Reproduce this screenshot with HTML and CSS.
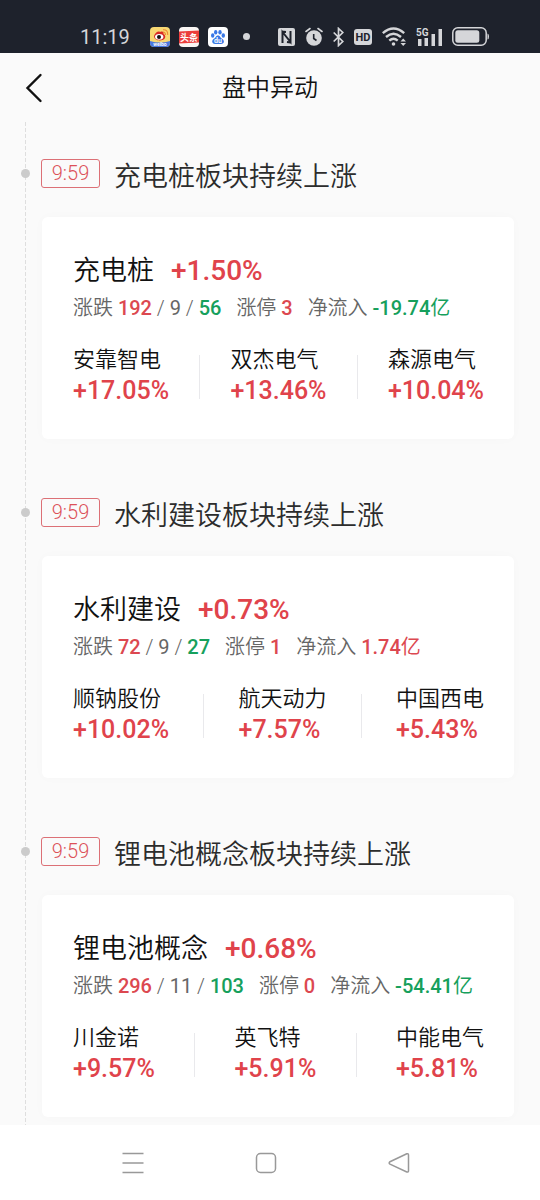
FILE: index.html
```html
<!DOCTYPE html>
<html lang="zh-CN">
<head>
<meta charset="utf-8">
<meta name="viewport" content="width=device-width, initial-scale=1">
<title>盘中异动</title>
<link rel="stylesheet" href="styles.css">
</head>
<body>
<div class="app">
  <div class="status">
    <div class="status-left">
      <span class="clock">11:19</span>
      <svg width="20" height="20" viewBox="0 0 20 20"><defs><clipPath id="r"><rect width="20" height="20" rx="4"/></clipPath></defs><g clip-path="url(#r)"><rect width="20" height="20" fill="#f8d873"/><path d="M0 14Q10 17 20 14V20H0Z" fill="#4b78df"/><path d="M4 9C5 5.500 8.500 3.500 10 5C13 4 14 5 13.500 7C16 8 16 12 12.500 13C9 14.200 4 13 4 9Z" fill="#d92b27"/><ellipse cx="9.200" cy="9.800" rx="4.200" ry="2.900" fill="#fff"/><circle cx="9" cy="10" r="2" fill="#181414"/><path d="M13 5Q15.500 5 15.500 8M13 2.800Q18 2.500 17.700 8" fill="none" stroke="#ef8935" stroke-width="1.100"/><text x="10" y="18.800" text-anchor="middle" class="logo-word">weibo</text></g></svg>
      <svg width="20" height="20" viewBox="0 0 20 20"><g clip-path="url(#r)"><rect width="20" height="20" fill="#faf6f4"/><path d="M0 4.500L20 3.500V15.500L0 16.500Z" fill="#eb3d3b"/><text x="10" y="13.500" text-anchor="middle" class="logo-news">头条</text></g></svg>
      <svg width="20" height="20" viewBox="0 0 20 20"><rect width="20" height="20" rx="4" fill="#fff"/><g fill="#3978e6"><ellipse cx="4.700" cy="8.500" rx="1.700" ry="2.200"/><ellipse cx="7.700" cy="5.200" rx="1.700" ry="2.300"/><ellipse cx="12" cy="5.200" rx="1.700" ry="2.300"/><ellipse cx="15.300" cy="8.500" rx="1.700" ry="2.200"/><path d="M10 8.500C7.500 8.500 8 11 5.500 12C3 14 4.500 17 7 17H13C16 17 17 14 14.500 12C12 11 12.500 8.500 10 8.500Z"/></g><text x="10" y="16" text-anchor="middle" class="logo-du">du</text></svg>
      <span class="status-dot"></span>
    </div>
    <div class="status-right">
      <svg width="17" height="18" viewBox="0 0 17 18"><rect width="17" height="18" rx="2" fill="#d5d6d9"/><path d="M4.500 15V4L12.500 14V3M8 4L4 3.500M12.500 14.500L9 14" fill="none" stroke="#1e222c" stroke-width="2"/></svg>
      <svg width="18" height="20" viewBox="0 0 18 20"><circle cx="9" cy="11" r="7.800" fill="#d5d6d9"/><path d="M1 4.500L5 1.500M17 4.500L13 1.500" stroke="#d5d6d9" stroke-width="1.600" stroke-linecap="round"/><path d="M8.700 7V11.500L11.500 13.500" fill="none" stroke="#1e222c" stroke-width="1.600"/></svg>
      <svg width="11" height="20" viewBox="0 0 11 20"><path d="M0.700 5.500L9.800 14.500L5.500 18.500V1.500L9.800 5.500L0.700 14.500" fill="none" stroke="#d5d6d9" stroke-width="1.700"/></svg>
      <svg width="18" height="16" viewBox="0 0 18 16"><rect width="18" height="16" rx="3" fill="#d5d6d9"/><text x="9" y="12" text-anchor="middle" class="hd">HD</text></svg>
      <svg width="24" height="20" viewBox="0 0 24 20"><g fill="none" stroke="#d5d6d9" stroke-width="2.400"><path d="M0.800 6.200Q11.500 -3.200 22.200 6.200"/><path d="M4 10Q11.500 3.500 19 10"/><path d="M7.300 13.700Q11.500 10 15.700 13.700"/></g><circle cx="11.500" cy="17" r="1.800" fill="#d5d6d9"/><path d="M18.500 14.500L21.200 11.500L24 14.500ZM18.500 16L21.200 19L24 16Z" fill="#d5d6d9"/></svg>
      <svg width="26" height="20" viewBox="0 0 26 20"><text x="0" y="9" class="net">5G</text><path d="M2 12H5.500V19H2ZM8.500 11H12V19H8.500ZM15.500 7H19V19H15.500ZM22.500 2H26V19H22.500Z" fill="#d5d6d9"/></svg>
      <svg width="37" height="19" viewBox="0 0 37 19"><rect x="0.800" y="0.800" width="33.400" height="17.400" rx="5" fill="none" stroke="#d5d6d9" stroke-width="1.500"/><rect x="3.300" y="3.300" width="24" height="12.400" rx="2.500" fill="#d5d6d9"/><path d="M35.500 6.500Q37 7 37 9.500T35.500 12.500Z" fill="#d5d6d9"/></svg>
    </div>
  </div>

  <header class="topbar">
    <button class="back" type="button" aria-label="返回"><svg width="18" height="30" viewBox="0 0 18 30"><path d="M15.500 2L2.500 15L15.500 28" fill="none" stroke="#111" stroke-width="2.400" stroke-linecap="round"/></svg></button>
    <h1 class="page-title">盘中异动</h1>
  </header>

  <main class="feed">
    <section class="event">
      <div class="event-head"><time class="badge">9:59</time><h2 class="event-title">充电桩板块持续上涨</h2></div>
      <article class="card">
        <div class="sector"><span>充电桩</span><span class="sector-pct">+1.50%</span></div>
        <div class="meta"><span>涨跌 <b class="up">192</b> / <span class="flat">9</span> / <b class="down">56</b></span><span>涨停 <b class="up">3</b></span><span>净流入 <b class="down">-19.74<span class="unit">亿</span></b></span></div>
        <div class="stocks">
          <div><div class="name">安靠智电</div><div class="pct">+17.05%</div></div><i class="rule"></i>
          <div><div class="name">双杰电气</div><div class="pct">+13.46%</div></div><i class="rule"></i>
          <div><div class="name">森源电气</div><div class="pct">+10.04%</div></div>
        </div>
      </article>
    </section>
    <section class="event">
      <div class="event-head"><time class="badge">9:59</time><h2 class="event-title">水利建设板块持续上涨</h2></div>
      <article class="card">
        <div class="sector"><span>水利建设</span><span class="sector-pct">+0.73%</span></div>
        <div class="meta"><span>涨跌 <b class="up">72</b> / <span class="flat">9</span> / <b class="down">27</b></span><span>涨停 <b class="up">1</b></span><span>净流入 <b class="up">1.74<span class="unit">亿</span></b></span></div>
        <div class="stocks">
          <div><div class="name">顺钠股份</div><div class="pct">+10.02%</div></div><i class="rule"></i>
          <div><div class="name">航天动力</div><div class="pct">+7.57%</div></div><i class="rule"></i>
          <div><div class="name">中国西电</div><div class="pct">+5.43%</div></div>
        </div>
      </article>
    </section>
    <section class="event">
      <div class="event-head"><time class="badge">9:59</time><h2 class="event-title">锂电池概念板块持续上涨</h2></div>
      <article class="card">
        <div class="sector"><span>锂电池概念</span><span class="sector-pct">+0.68%</span></div>
        <div class="meta"><span>涨跌 <b class="up">296</b> / <span class="flat">11</span> / <b class="down">103</b></span><span>涨停 <b class="up">0</b></span><span>净流入 <b class="down">-54.41<span class="unit">亿</span></b></span></div>
        <div class="stocks">
          <div><div class="name">川金诺</div><div class="pct">+9.57%</div></div><i class="rule"></i>
          <div><div class="name">英飞特</div><div class="pct">+5.91%</div></div><i class="rule"></i>
          <div><div class="name">中能电气</div><div class="pct">+5.81%</div></div>
        </div>
      </article>
    </section>
  </main>

  <nav class="sysnav">
    <button type="button" aria-label="菜单"><svg width="22" height="22" viewBox="0 0 22 22"><path d="M0.500 1.500H21.500M0.500 11H21.500M0.500 20.500H21.500"/></svg></button>
    <button type="button" aria-label="主页"><svg width="22" height="22" viewBox="0 0 22 22"><rect x="1.500" y="1.500" width="19" height="19" rx="4"/></svg></button>
    <button type="button" aria-label="后退"><svg width="22" height="22" viewBox="0 0 22 22"><path d="M18.800 1.800L2 9.700Q0.300 11 2 12.200L18.800 20Q20.500 20.500 20.500 18.800V3Q20.500 1.200 18.800 1.800Z"/></svg></button>
  </nav>
</div>
</body>
</html>
```
FILE: styles.css
```css
* { box-sizing: border-box; }

body {
  margin: 0;
  background: #fafafa;
  color: #111;
  font-family: Roboto, "Noto Sans CJK SC", sans-serif;
  font-weight: 350;
}

button {
  padding: 0;
  border: 0;
  background: none;
}

svg { display: block; }

.app {
  display: flex;
  flex-direction: column;
  min-height: 100vh;
}

.status {
  display: flex;
  justify-content: space-between;
  height: 53px;
  padding: 20px 51px 0 80px;
  background: #1e222c;
}

.status-left,
.status-right {
  display: flex;
  align-items: center;
  gap: 10px;
}

.clock {
  margin-right: 11px;
  color: #d5d6d9;
  font-size: 20px;
  font-weight: 400;
}

.status-left { gap: 9px; }

.status-dot {
  width: 7px;
  height: 7px;
  margin-left: 6px;
  border-radius: 50%;
  background: #d5d6d9;
}

.logo-word { fill: #fff; font-size: 5px; font-weight: 700; }
.logo-news { fill: #fff; font-size: 9px; font-weight: 700; }
.logo-du { fill: #fff; font-size: 7px; font-weight: 700; }
.hd { fill: #1e222c; font-size: 11px; font-weight: 700; }
.net { fill: #d5d6d9; font-size: 10px; font-weight: 700; }

.topbar {
  display: grid;
  grid-template-columns: 52px 1fr 52px;
  align-items: center;
  height: 69px;
}

.back { padding-left: 25px; }

.page-title {
  margin: 0;
  font-size: 24px;
  font-weight: 350;
  line-height: 36px;
  text-align: center;
}

.feed {
  flex: 1;
  padding: 37px 26px 8px 41px;
  background: repeating-linear-gradient(#dedede 0 4px, #fafafa 4px 6px) 25px 0 / 1px 100% no-repeat;
}

.event + .event { margin-top: 59px; }

.event-head {
  position: relative;
  display: flex;
  align-items: flex-start;
  gap: 14px;
  height: 29px;
}

.event-head::before {
  content: "";
  position: absolute;
  left: -20px;
  top: 10px;
  width: 9px;
  height: 9px;
  border-radius: 50%;
  background: #cbcbcb;
}

.badge {
  width: 59px;
  height: 29px;
  border: 1px solid #dc7076;
  border-radius: 3px;
  color: #dc5158;
  font-size: 20px;
  line-height: 26px;
  text-align: center;
}

.event-title {
  margin: 0;
  color: #2c2c2c;
  font-size: 27px;
  font-weight: 350;
  line-height: 36px;
}

.card {
  margin: 29px 0 0 1px;
  padding: 36px 30px 32px 31px;
  border-radius: 6px;
  background: #fff;
  box-shadow: 0 0 12px rgba(0, 0, 0, 0.02);
}

.sector {
  display: flex;
  gap: 17px;
  font-size: 27px;
  line-height: 36px;
}

.sector-pct {
  color: #e0434b;
  font-size: 28px;
  font-weight: 500;
}

.meta {
  display: flex;
  gap: 15px;
  margin-top: 5px;
  color: #666;
  font-size: 20px;
  line-height: 28px;
  white-space: nowrap;
}

.meta b { font-weight: 500; }
.flat, .meta .unit { font-weight: 400; }
.up { color: #dc4850; }
.down { color: #16a05c; }

.stocks {
  display: flex;
  justify-content: space-between;
  align-items: center;
  margin-top: 24px;
}

.name {
  font-size: 22px;
  line-height: 28px;
}

.pct {
  margin-top: 1px;
  color: #e0434b;
  font-size: 25px;
  font-weight: 500;
  line-height: 32px;
}

.rule {
  width: 1px;
  height: 44px;
  background: #e9e9ec;
}

.sysnav {
  display: grid;
  grid-template-columns: repeat(3, 1fr);
  height: 75px;
  padding: 0 74px 0 66px;
  background: #fff;
}

.sysnav button {
  display: grid;
  place-items: center;
}

.sysnav svg {
  fill: none;
  stroke: #999;
  stroke-width: 1.5px;
}
```
